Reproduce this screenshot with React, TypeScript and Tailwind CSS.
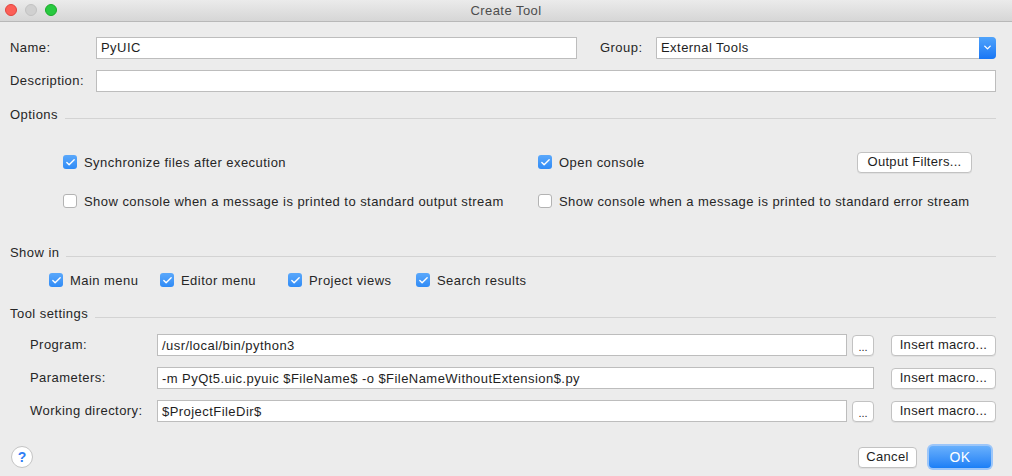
import { Check, ChevronDown } from "lucide-react";

const font = { fontFamily: '"Liberation Sans", Arial, sans-serif' };

function Box({ checked }: { checked?: boolean }) {
  return checked ? (
    <span className="w-[14px] h-[14px] rounded-[3px] bg-gradient-to-b from-[#5aa8fb] to-[#2f8bf6] flex items-center justify-center shrink-0">
      <Check size={11} strokeWidth={3} className="text-white" />
    </span>
  ) : (
    <span className="w-[14px] h-[14px] rounded-[3px] bg-white border border-[#b3b3b3] shrink-0" />
  );
}

function CheckItem({ checked, label, className = "" }: { checked?: boolean; label: string; className?: string }) {
  return (
    <div className={`flex items-center gap-[7px] ${className}`}>
      <Box checked={checked} />
      <span className="pt-px">{label}</span>
    </div>
  );
}

function Section({ title, className = "" }: { title: string; className?: string }) {
  return (
    <div className={`flex items-center h-[16px] ${className}`}>
      <span className="text-[#262626]">{title}</span>
      <div className="flex-1 h-px bg-[#d3d3d3] ml-[7px] mt-[6px]" />
    </div>
  );
}

function Input({ value = "", className = "" }: { value?: string; className?: string }) {
  return (
    <div className={`h-[22px] bg-white border border-[#bdbdbd] flex items-center px-[4px] pt-px text-[#1e1e1e] whitespace-nowrap overflow-hidden ${className}`}>
      {value}
    </div>
  );
}

function Btn({ children, className = "" }: { children: React.ReactNode; className?: string }) {
  return (
    <div
      className={`h-[21px] bg-white border border-[#c2c2c2] rounded-[4px] flex items-center justify-center text-[#1e1e1e] tracking-[0.3px] shadow-[0_1px_0_rgba(0,0,0,0.05)] whitespace-nowrap ${className}`}
    >
      {children}
    </div>
  );
}

export default function App() {
  return (
    <div style={font} className="w-[1012px] h-[476px] bg-[#ececec] text-[13px] tracking-[0.45px] text-[#262626] overflow-hidden">
      {/* title bar */}
      <div className="relative h-[22px] bg-gradient-to-b from-[#ebebeb] to-[#d6d6d6] border-b border-[#b8b8b8] flex items-center justify-center">
        <div className="absolute left-[5px] top-[4px] flex gap-[8px]">
          <span className="w-[12px] h-[12px] rounded-full bg-[#fc5f57] border border-[#e0443e]" />
          <span className="w-[12px] h-[12px] rounded-full bg-[#d0d0d0] border border-[#c2c2c2]" />
          <span className="w-[12px] h-[12px] rounded-full bg-[#28c940] border border-[#1aab29]" />
        </div>
        <span className="text-[#4d4d4d]">Create Tool</span>
      </div>

      <div className="pl-[10px] pr-[16px]">
        {/* name / group */}
        <div className="flex items-center mt-[15px] h-[21px]">
          <span className="w-[86px]">Name:</span>
          <Input value="PyUIC" className="w-[481px]" />
          <span className="ml-[23px] w-[56px]">Group:</span>
          <div className="flex-1 h-[22px] flex bg-white border border-[#bdbdbd] rounded-r-[4px]">
            <span className="flex-1 flex items-center px-[4px] pt-px text-[#1e1e1e]">External Tools</span>
            <span className="w-[17px] -my-px -mr-px rounded-r-[4px] bg-gradient-to-b from-[#4fa3fb] to-[#1776f5] flex items-center justify-center">
              <ChevronDown size={11} strokeWidth={3} className="text-white" />
            </span>
          </div>
        </div>

        <div className="flex items-center mt-[12px] h-[21px]">
          <span className="w-[86px]">Description:</span>
          <Input className="flex-1" />
        </div>

        <Section title="Options" className="mt-[16px]" />

        <div className="flex items-center h-[20px] mt-[29px] pl-[53px]">
          <CheckItem checked label="Synchronize files after execution" className="w-[475px]" />
          <CheckItem checked label="Open console" className="flex-1" />
          <Btn className="w-[115px] mr-[24px]">Output Filters...</Btn>
        </div>
        <div className="flex items-center h-[20px] mt-[19px] pl-[53px]">
          <CheckItem label="Show console when a message is printed to standard output stream" className="w-[475px]" />
          <CheckItem label="Show console when a message is printed to standard error stream" />
        </div>

        <Section title="Show in" className="mt-[34px]" />
        <div className="flex items-center h-[20px] mt-[9px] pl-[39px]">
          <CheckItem checked label="Main menu" className="w-[111px]" />
          <CheckItem checked label="Editor menu" className="w-[128px]" />
          <CheckItem checked label="Project views" className="w-[128px]" />
          <CheckItem checked label="Search results" />
        </div>

        <Section title="Tool settings" className="mt-[16px]" />

        <div className="pl-[20px]">
          <div className="flex items-center mt-[12px]">
            <span className="w-[127px]">Program:</span>
            <Input value="/usr/local/bin/python3" className="w-[690px]" />
            <Btn className="w-[22px] ml-[5px] text-[11px] leading-none pt-[4px] tracking-normal">...</Btn>
            <Btn className="flex-1 ml-[17px]">Insert macro...</Btn>
          </div>
          <div className="flex items-center mt-[11px]">
            <span className="w-[127px]">Parameters:</span>
            <Input value="-m PyQt5.uic.pyuic $FileName$ -o $FileNameWithoutExtension$.py" className="w-[717px]" />
            <Btn className="flex-1 ml-[17px]">Insert macro...</Btn>
          </div>
          <div className="flex items-center mt-[11px]">
            <span className="w-[127px]">Working directory:</span>
            <Input value="$ProjectFileDir$" className="w-[690px]" />
            <Btn className="w-[22px] ml-[5px] text-[11px] leading-none pt-[4px] tracking-normal">...</Btn>
            <Btn className="flex-1 ml-[17px]">Insert macro...</Btn>
          </div>
        </div>

        <div className="flex items-center mt-[23px] h-[24px]">
          <span className="w-[22px] h-[22px] rounded-full bg-white border border-[#c4c4c4] flex items-center justify-center text-[#2f7ef5] text-[14px] font-bold ml-px tracking-normal">
            ?
          </span>
          <div className="flex-1" />
          <Btn className="w-[59px] h-[21px]">Cancel</Btn>
          <div className="ml-[10px] mr-[3px] p-[2px] rounded-[6px] bg-[#9cc6f9]">
            <div className="w-[62px] h-[22px] rounded-[4px] bg-gradient-to-b from-[#68b0fc] to-[#1a7ff6] text-white flex items-center justify-center text-[14px]">
              OK
            </div>
          </div>
        </div>
      </div>
    </div>
  );
}
